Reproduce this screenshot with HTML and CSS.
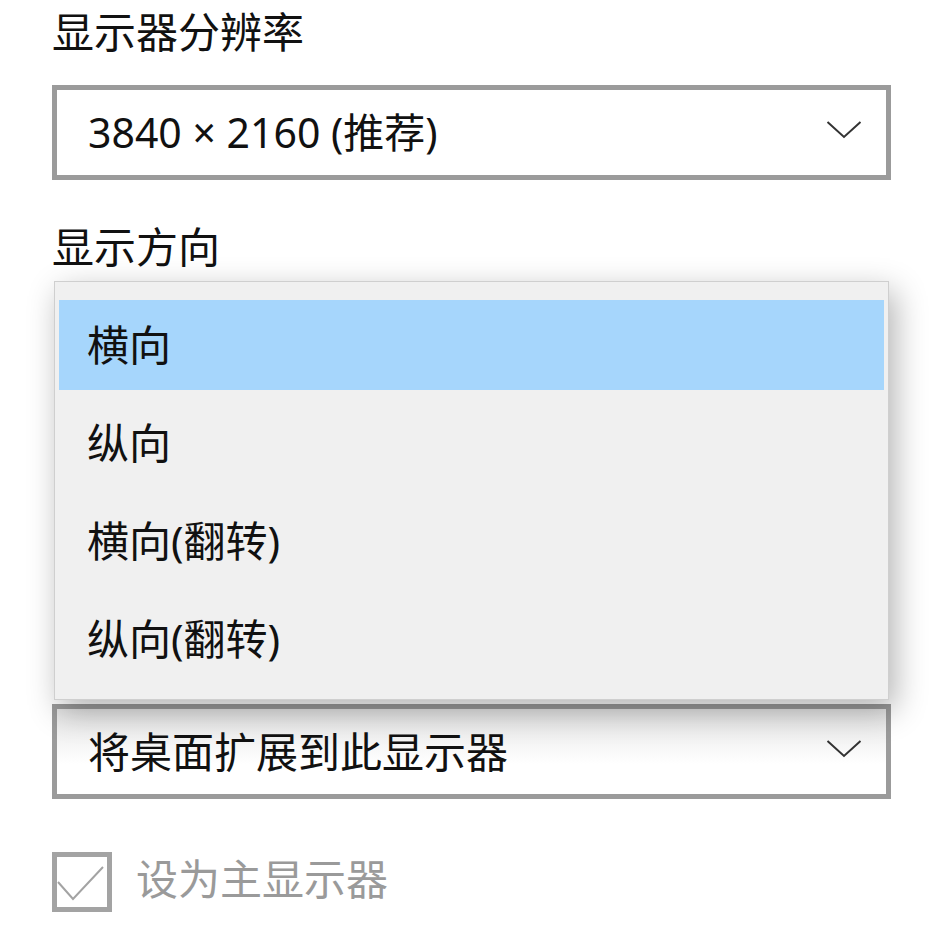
FILE: index.html
```html
<!DOCTYPE html>
<html lang="zh-CN">
<head>
    <meta charset="UTF-8">
    <title>显示设置</title>
    <link rel="stylesheet" href="styles.css">
</head>
<body>

    <div class="panel">
        <div class="label">显示器分辨率</div>
        <div class="select">
            <span class="value">3840 × 2160 (推荐)</span>
            <svg class="chevron" width="36" height="20" viewBox="0 0 36 20">
                <polyline points="1.5,2 18,17 34.5,2" fill="none" stroke="#333" stroke-width="2"/>
            </svg>
        </div>

        <div class="label label-gap">显示方向</div>
        <ul class="dropdown">
            <li class="item selected">横向</li>
            <li class="item">纵向</li>
            <li class="item">横向(翻转)</li>
            <li class="item">纵向(翻转)</li>
        </ul>

        <div class="select select-multi">
            <span class="value">将桌面扩展到此显示器</span>
            <svg class="chevron" width="36" height="20" viewBox="0 0 36 20">
                <polyline points="1.5,2 18,17 34.5,2" fill="none" stroke="#333" stroke-width="2"/>
            </svg>
        </div>

        <label class="check">
            <span class="box">
                <svg width="50" height="50" viewBox="0 0 50 50">
                    <polyline points="1,25 16,42 46,10" fill="none" stroke="#a3a3a3" stroke-width="2"/>
                </svg>
            </span>
            <span class="check-text">设为主显示器</span>
        </label>
    </div>

</body>
</html>
```

FILE: styles.css
```css
body {
    margin: 0;
    background-color: #fff;
    font-family: "Noto Sans", "Noto Sans CJK SC", sans-serif;
    color: #111;
}

.panel {
    width: 839px;
    padding: 4px 0 0 52px;
}

.label {
    font-size: 42px;
    line-height: 56px;
    height: 56px;
}

.label-gap {
    margin-top: 39px;
}

.select {
    box-sizing: border-box;
    height: 95px;
    margin-top: 25px;
    border: 5px solid #9b9b9b;
    background-color: #fff;
    display: flex;
    align-items: center;
    justify-content: space-between;
    padding: 0 24px 5px 31px;
}

.value {
    font-size: 41px;
}

.select-multi {
    margin-top: 4px;
    background: linear-gradient(#e4e4e4, #fff 65%);
}

.select-multi .value {
    font-size: 42px;
}

.dropdown {
    position: relative;
    z-index: 1;
    list-style: none;
    display: flex;
    flex-direction: column;
    gap: 8px;
    margin: 6px 2px 0;
    padding: 18px 4px 15px;
    background-color: #f0f0f0;
    border: 1px solid #cfcfcf;
    box-shadow: 6px 10px 30px rgba(0, 0, 0, 0.3);
}

.item {
    height: 90px;
    box-sizing: border-box;
    padding: 0 0 5px 28px;
    display: flex;
    align-items: center;
    font-size: 42px;
}

.selected {
    background-color: #a6d6fc;
}

.check {
    display: flex;
    align-items: center;
    height: 60px;
    margin-top: 53px;
    gap: 24px;
}

.box {
    box-sizing: border-box;
    width: 60px;
    height: 60px;
    border: 5px solid #a3a3a3;
    display: flex;
}

.check-text {
    font-size: 42px;
    line-height: 54px;
    color: #9a9a9a;
    padding-bottom: 6px;
}
```
